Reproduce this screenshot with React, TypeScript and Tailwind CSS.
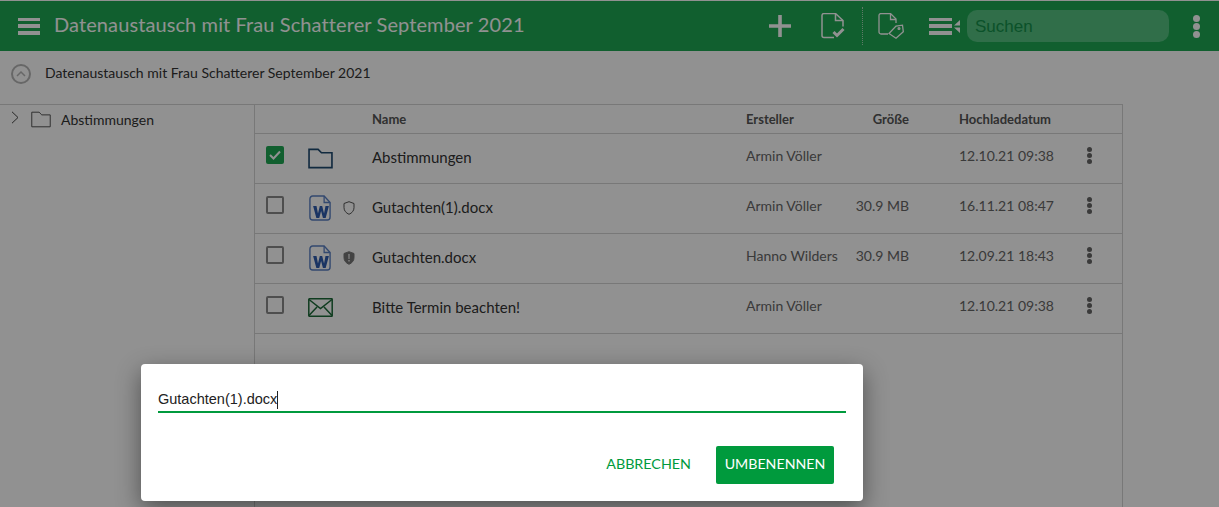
const rows = [
  { name: "Abstimmungen", kind: "folder", by: "Armin Völler", size: "", date: "12.10.21 09:38", checked: true },
  { name: "Gutachten(1).docx", kind: "word", shield: "outline", by: "Armin Völler", size: "30.9 MB", date: "16.11.21 08:47" },
  { name: "Gutachten.docx", kind: "word", shield: "solid", by: "Hanno Wilders", size: "30.9 MB", date: "12.09.21 18:43" },
  { name: "Bitte Termin beachten!", kind: "mail", by: "Armin Völler", size: "", date: "12.10.21 09:38" },
];

function Dots({ className }: { className: string }) {
  return (
    <div className={`flex flex-col items-center ${className}`}>
      <span className="size-[5px] rounded-full bg-current" />
      <span className="size-[5px] rounded-full bg-current" />
      <span className="size-[5px] rounded-full bg-current" />
    </div>
  );
}

function FolderIcon({ className, color, width }: { className: string; color: string; width: string }) {
  return (
    <svg className={className} viewBox="0 0 26 22" fill="none" stroke={color} strokeWidth={width}>
      <path d="M1 20.5V1.500h9.500l3.500 3.500h11v15.500z" />
    </svg>
  );
}

function WordIcon() {
  return (
    <svg className="mb-[2px] ml-[2px] h-[26px] w-[22px]" viewBox="0 0 24 26" preserveAspectRatio="none" fill="none">
      <path d="M4 1h12.500L23 7.500V22a3 3 0 0 1-3 3H4a3 3 0 0 1-3-3V4a3 3 0 0 1 3-3z" stroke="#5a80c4" strokeWidth="1.5" />
      <path d="M16.500 1v6.500H23" stroke="#5a80c4" strokeWidth="1.400" />
      <path d="M4.500 11h3.700l1.600 7.500 2-7.500h2.600l2 7.500 1.600-7.500h3.700l-3.500 12h-3l-2-7-2 7H8z" fill="#2f5cae" />
    </svg>
  );
}

function MailIcon() {
  return (
    <svg className="mb-[3px] ml-[1px] h-[19px] w-[25px]" viewBox="0 0 25 19" fill="none" stroke="#1c6a38" strokeWidth="1.500">
      <rect x="0.800" y="0.800" width="23.400" height="17.400" rx="0.500" />
      <path d="M1 1.500l11.500 9 11.500-9M1 17.500l8-8.500M24 17.500L16 9" />
    </svg>
  );
}

function Shield({ solid }: { solid: boolean }) {
  return (
    <svg className="ml-[10px] mt-[3px] h-[14px] w-[12px]" viewBox="0 0 12 14">
      <path
        d="M6 .7l5 1.800v4.200c0 3-2 5.300-5 6.600-3-1.300-5-3.600-5-6.600V2.500z"
        fill={solid ? "#777" : "none"}
        stroke={solid ? "#777" : "#555"}
        strokeWidth="1"
      />
      {solid && <path d="M5.200 3h1.600l-.2 5H5.400zM5.200 9h1.600v1.600H5.200z" fill="#ddd" />}
    </svg>
  );
}

export default function App() {
  return (
    <div className="relative flex h-[507px] w-[1219px] flex-col overflow-hidden bg-white pt-px font-['Lato',sans-serif]">
      {/* Header */}
      <div className="flex h-[50px] shrink-0 items-center bg-[#1ea854] text-white">
        <div className="ml-[18px] flex h-[17px] w-[22px] flex-col justify-between">
          <span className="h-[3.5px] bg-white" />
          <span className="h-[3.5px] bg-white" />
          <span className="h-[3.5px] bg-white" />
        </div>
        <span className="mb-[5px] ml-[14px] text-[20px] leading-none tracking-[0.1px]">Datenaustausch mit Frau Schatterer September 2021</span>
        <div className="ml-auto flex items-center">
          <svg className="size-[22px]" viewBox="0 0 22 22" stroke="white" strokeWidth="3.600">
            <path d="M11 0v22M0 11h22" />
          </svg>
          <svg className="ml-[30px] h-[26px] w-[24px]" viewBox="0 0 24 26" fill="none" stroke="white" strokeWidth="1.500">
            <path d="M13 24.500H3a2 2 0 0 1-2-2V2.500a2 2 0 0 1 2-2h11.500L22 7.500v6" />
            <path d="M14.500 1v6.500H22" />
            <path d="M12.500 19l3.500 3.500 6.500-6.500" strokeWidth="3" />
          </svg>
          <div className="ml-[17px] h-[38px] border-l border-dotted border-[#a8d8b8]" />
          <svg className="ml-[15px] h-[26px] w-[26px]" viewBox="0 0 26 26" fill="none" stroke="white" strokeWidth="1.300">
            <path d="M10 21H3a2 2 0 0 1-2-2V2.500a2 2 0 0 1 2-2h9.500L18 6v4" />
            <path d="M12.500 1v5.500H18" />
            <path d="M11 20.500l7-7.500 6.500-.8.8 6.500-7.300 6.500z" />
            <circle cx="21" cy="15.500" r="0.900" />
          </svg>
          <div className="ml-[25px] flex h-[17px] w-[23px] flex-col justify-between">
            <span className="h-[3.5px] bg-white" />
            <span className="h-[3.5px] bg-white" />
            <span className="h-[3.5px] bg-white" />
          </div>
          <svg className="ml-[2px] h-[15px] w-[6px]" viewBox="0 0 6 15" fill="white">
            <path d="M6 1v5.500H0zM6 14V8.500H0z" />
          </svg>
          <div className="ml-[7px] flex h-[32px] w-[202px] items-center rounded-[10px] bg-[#55c180] pl-[8px] pt-[1px] font-['Liberation_Sans',sans-serif] text-[17px] text-[#14904a]">
            Suchen
          </div>
          <Dots className="ml-[24px] mr-[19px] w-[7px] gap-[1px] text-white [&>span]:size-[7px]" />
        </div>
      </div>

      {/* Breadcrumb */}
      <div className="flex h-[53px] shrink-0 items-center pb-[7px]">
        <div className="ml-[11px] flex size-[20px] items-center justify-center rounded-full border-2 border-[#b5b5b5]">
          <svg className="h-[8px] w-[10px]" viewBox="0 0 10 8" fill="none" stroke="#b5b5b5" strokeWidth="1.500">
            <path d="M1 6l4-4 4 4" />
          </svg>
        </div>
        <span className="mb-[3px] ml-[14px] text-[14px] text-[#333]">Datenaustausch mit Frau Schatterer September 2021</span>
      </div>

      {/* Content */}
      <div className="flex min-h-0 flex-1">
        <div className="w-[254px] shrink-0 border-t border-[#d4d4d4]">
          <div className="flex h-[29px] items-center">
            <svg className="mb-[4px] ml-[11px] h-[13px] w-[8px]" viewBox="0 0 8 13" fill="none" stroke="#444" strokeWidth="1">
              <path d="M1 .8l6 5.700-6 5.700" />
            </svg>
            <FolderIcon className="ml-[12px] h-[17px] w-[20px]" color="#555" width="1.300" />
            <span className="ml-[10px] text-[14px] text-[#333]">Abstimmungen</span>
          </div>
        </div>
        <div className="w-[869px] shrink-0 border-x border-t border-[#d4d4d4]">
          <div className="flex h-[29px] items-center border-b border-[#d4d4d4] pt-[1px] text-[13px] font-bold text-[#555]">
            <span className="w-[117px]" />
            <span className="w-[374px]">Name</span>
            <span className="w-[100px]">Ersteller</span>
            <span className="w-[63px] text-right">Größe</span>
            <span className="ml-[50px]">Hochladedatum</span>
          </div>
          {rows.map((row) => (
            <div key={row.name} className="flex h-[50px] items-center border-b border-[#d4d4d4] pb-[4px] text-[14px] text-[#666]">
              <div className="flex w-[117px] items-center">
                {row.checked ? (
                  <div className="mb-[4px] ml-[11px] flex size-[18px] items-center justify-center rounded-[2px] bg-[#1ea854]">
                    <svg className="h-[10px] w-[12px]" viewBox="0 0 12 10" fill="none" stroke="white" strokeWidth="2">
                      <path d="M1 5l3.500 3.500L11 1.500" />
                    </svg>
                  </div>
                ) : (
                  <div className="mb-[4px] ml-[11px] size-[18px] rounded-[2px] border-2 border-[#8a8a8a]" />
                )}
                <div className="ml-[23px] mt-[4px] flex w-[26px] items-center justify-start">
                  {row.kind === "folder" && <FolderIcon className="ml-[1px] h-[21px] w-[25px]" color="#1f4a70" width="1.700" />}
                  {row.kind === "word" && <WordIcon />}
                  {row.kind === "mail" && <MailIcon />}
                </div>
                {row.shield && <Shield solid={row.shield === "solid"} />}
              </div>
              <span className="mt-[2px] w-[374px] text-[15px] text-[#333]">{row.name}</span>
              <span className="mb-[2px] w-[100px]">{row.by}</span>
              <span className="mb-[2px] w-[63px] text-right">{row.size}</span>
              <span className="mb-[2px] ml-[50px] w-[127px]">{row.date}</span>
              <Dots className="mb-[2px] w-[7px] gap-[1px] text-[#666]" />
            </div>
          ))}
        </div>
      </div>

      {/* Backdrop and dialog */}
      <div className="absolute inset-0 bg-black/[0.43]" />
      <div className="absolute left-[141px] top-[364px] flex h-[137px] w-[722px] flex-col rounded-[4px] bg-white px-[17px] shadow-[0_8px_24px_rgba(0,0,0,0.45)]">
        <div className="mt-[24px] flex h-[25px] items-center border-b-2 border-[#009a3d] pt-[1px] font-['Liberation_Sans',sans-serif] text-[14.5px] text-[#222]">
          Gutachten(1).docx
          <span className="h-[18px] w-px bg-[#222]" />
        </div>
        <div className="mt-[33px] flex items-center justify-end pr-[12px]">
          <span className="mb-[3px] mr-[25px] text-[14.3px] text-[#009a3d]">ABBRECHEN</span>
          <span className="flex h-[38px] w-[118px] items-center justify-center rounded-[2px] bg-[#009a3d] pb-[3px] text-[14.2px] text-white">UMBENENNEN</span>
        </div>
      </div>
    </div>
  );
}
